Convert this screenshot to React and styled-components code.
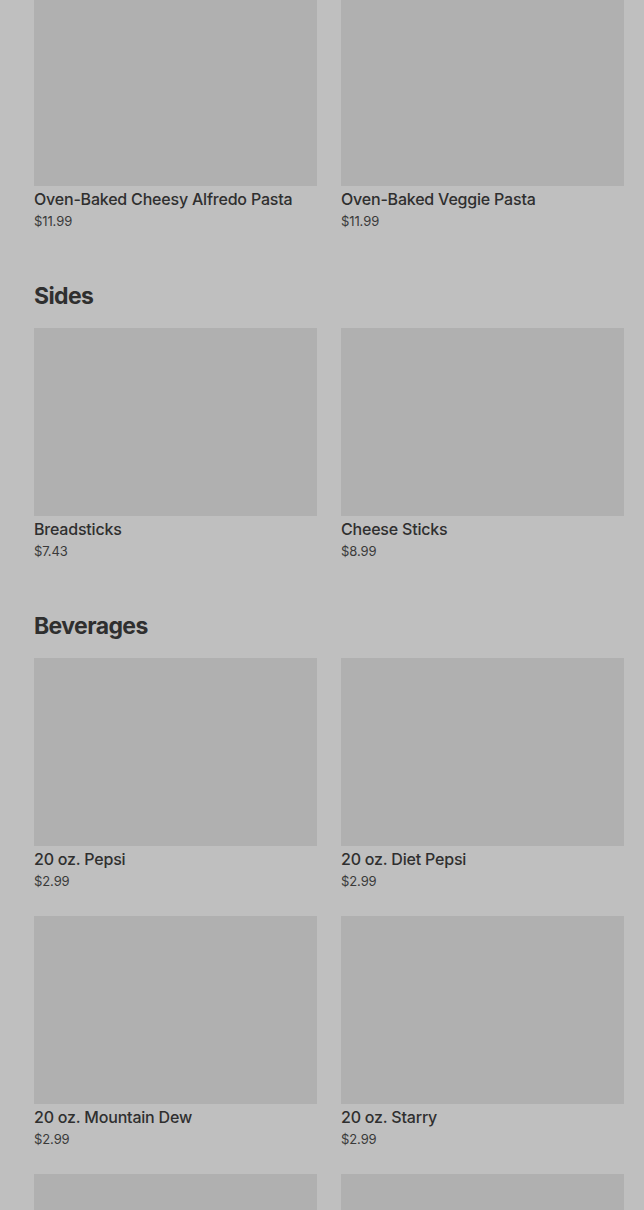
import React from 'react';
import styled, { createGlobalStyle } from 'styled-components';

const GlobalStyle = createGlobalStyle`
    html, body {
        margin: 0;
        padding: 0;
        background: #bfbfbf;
        font-family: Inter, "Liberation Sans", sans-serif;
        color: #2f2f2f;
        overflow: hidden;
    }
`

const Page = styled.main`
    display: flex;
    flex-direction: column;
    gap: 48px;
    margin-top: -2px;
    padding: 0 20px 0 34px;
    height: 1212px;
    overflow: hidden;
`

const Section = styled.section`
    display: flex;
    flex-direction: column;
`

const Heading = styled.h2`
    margin: 0 0 16px;
    font-size: 23px;
    line-height: 32px;
    font-weight: 700;
    letter-spacing: -0.6px;
    color: #2f2f2f;
`

const Grid = styled.div`
    display: grid;
    grid-template-columns: 1fr 1fr;
    column-gap: 24px;
    row-gap: 24px;
`

const Card = styled.div`
    display: flex;
    flex-direction: column;
`

const Photo = styled.div`
    height: 188px;
    background: #b0b0b0;
`

const Name = styled.div`
    margin-top: 1px;
    font-size: 16px;
    line-height: 24px;
    font-weight: 500;
    letter-spacing: -0.2px;
    color: #2f2f2f;
`

const Price = styled.div`
    font-size: 13px;
    line-height: 21px;
    letter-spacing: -0.1px;
    color: #3a3a3a;
`

const menu = [
    {
        items: [
            { name: 'Oven-Baked Cheesy Alfredo Pasta', price: '$11.99' },
            { name: 'Oven-Baked Veggie Pasta', price: '$11.99' }
        ]
    },
    {
        title: 'Sides',
        items: [
            { name: 'Breadsticks', price: '$7.43' },
            { name: 'Cheese Sticks', price: '$8.99' }
        ]
    },
    {
        title: 'Beverages',
        items: [
            { name: '20 oz. Pepsi', price: '$2.99' },
            { name: '20 oz. Diet Pepsi', price: '$2.99' },
            { name: '20 oz. Mountain Dew', price: '$2.99' },
            { name: '20 oz. Starry', price: '$2.99' },
            { id: 'next-1' },
            { id: 'next-2' }
        ]
    }
];

export default function App() {
    return (
        <>
        <GlobalStyle />
        <Page>
            {menu.map((section, i) => (
                <Section key={i}>
                    {section.title && <Heading>{section.title}</Heading>}
                    <Grid>
                        {section.items.map(item => (
                            <Card key={item.name || item.id}>
                                <Photo />
                                {item.name && <Name>{item.name}</Name>}
                                {item.price && <Price>{item.price}</Price>}
                            </Card>
                        ))}
                    </Grid>
                </Section>
            ))}
        </Page>
        </>
    )
}
